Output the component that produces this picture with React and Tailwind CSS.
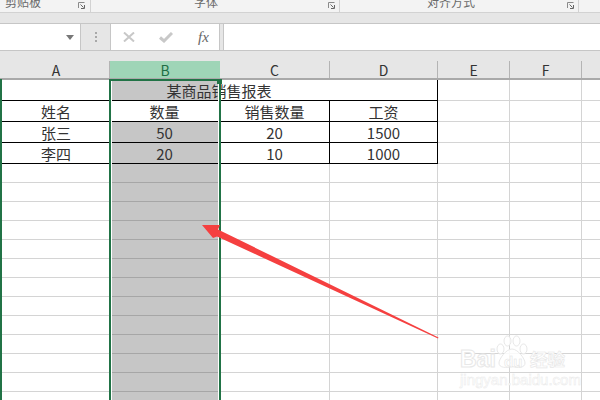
const FONT = "font-['Noto_Sans_CJK_SC','Noto_Sans',sans-serif]";

function Launcher() {
  return (
    <svg width="7" height="7" viewBox="0 0 7 7" className="block">
      <path d="M0.5 6V0.5H6.5" fill="none" stroke="#8a8a8a" />
      <path d="M2.5 2.5L5.5 5.5M3 6.5H6.5V3" fill="none" stroke="#666" />
    </svg>
  );
}

function RibbonGroup({ width, label, labelLeft, launcherGap }) {
  return (
    <div className={`relative h-full shrink-0 border-r border-[#d2d2d2] ${width}`}>
      <span className={`absolute top-[-6px] whitespace-nowrap text-[12px] leading-[16px] text-[#6a6a6a] ${labelLeft}`}>{label}</span>
      <span className={`absolute top-[2px] ${launcherGap}`}><Launcher /></span>
    </div>
  );
}

function HeaderCell({ label, width, selected }) {
  return (
    <div
      className={
        selected
          ? `flex shrink-0 items-center justify-center text-[14px] text-[#1f6e46] bg-[#9fd5b7] ${width}`
          : `flex shrink-0 items-center justify-center border-r border-[#b4b4b4] text-[14px] text-[#333] ${width}`
      }
    >
      {label}
    </div>
  );
}

const TOP_ROWS = [
  ["姓名", "数量", "销售数量", "工资"],
  ["张三", "50", "20", "1500"],
  ["李四", "20", "10", "1000"],
];

function DataCell({ children, width, gray }) {
  return (
    <div className={`flex h-full shrink-0 items-center justify-center border-r border-b border-black pt-px ${width} ${gray ? "bg-[#c6c6c6]" : "bg-white"}`}>
      {children}
    </div>
  );
}

function EmptyCols() {
  return (
    <>
      <div className="h-full w-[72px] shrink-0 border-r border-b border-[#d4d4d4]" />
      <div className="h-full w-[72px] shrink-0 border-r border-b border-[#d4d4d4]" />
      <div className="h-full flex-1 border-b border-[#d4d4d4]" />
    </>
  );
}

function BlankRow() {
  return (
    <div className="flex h-[19px] shrink-0">
      <div className="h-full w-[110px] shrink-0 border-b border-[#d4d4d4]" />
      <div className="h-full w-[110px] shrink-0 border-b border-[#a6a6a6] bg-[#c6c6c6]" />
      <div className="h-full w-[110px] shrink-0 border-r border-b border-[#d4d4d4]" />
      <div className="h-full w-[108px] shrink-0 border-r border-b border-[#d4d4d4]" />
      <EmptyCols />
    </div>
  );
}

export default function App() {
  return (
    <div className={`relative h-[400px] w-[600px] overflow-hidden bg-white ${FONT}`}>
      {/* ribbon */}
      <div className="flex h-[13px] border-b border-[#d2d2d2] bg-[#f3f3f3]">
        <RibbonGroup width="w-[91px]" label="剪贴板" labelLeft="left-[5px]" launcherGap="left-[78px]" />
        <RibbonGroup width="w-[249px]" label="字体" labelLeft="left-[103px]" launcherGap="left-[237px]" />
        <RibbonGroup width="w-[239px]" label="对齐方式" labelLeft="left-[87px]" launcherGap="left-[227px]" />
      </div>
      <div className="h-[10px] bg-[#e6e6e6]" />
      {/* formula bar */}
      <div className="flex h-[28px] items-stretch border-y border-[#c6c6c6] bg-[#e6e6e6]">
        <div className="flex w-[81px] shrink-0 items-center justify-end border-r border-[#c6c6c6] bg-white pr-[6px]">
          <svg width="8" height="5" viewBox="0 0 8 5"><path d="M0 0H8L4 5Z" fill="#777" /></svg>
        </div>
        <div className="flex w-[29px] shrink-0 flex-col items-center justify-center gap-[2px]">
          <span className="h-[2px] w-[2px] bg-[#a8a8a8]" />
          <span className="h-[2px] w-[2px] bg-[#a8a8a8]" />
          <span className="h-[2px] w-[2px] bg-[#a8a8a8]" />
        </div>
        <div className="flex w-[110px] shrink-0 items-center border-x border-[#c6c6c6] bg-white">
          <svg width="12" height="10" viewBox="0 0 12 10" className="ml-[12px]">
            <path d="M1 0.5L11 9.5M11 0.5L1 9.5" stroke="#c8c8c8" strokeWidth="2" fill="none" />
          </svg>
          <svg width="14" height="11" viewBox="0 0 14 11" className="ml-[24px]">
            <path d="M1 5.5L5 9L13 1" stroke="#c8c8c8" strokeWidth="3" fill="none" />
          </svg>
          <span className="ml-[25px] whitespace-nowrap text-[15px] italic leading-none font-['Liberation_Serif',serif] text-[#666]">fx</span>
        </div>
        <div className="ml-[3px] flex-1 border-l border-[#c6c6c6] bg-white" />
      </div>
      {/* column headers */}
      <div className="h-[10px] bg-[#e6e6e6]" />
      <div className="flex h-[19px] border-b-2 border-[#a9a9a9] bg-[#e6e6e6] leading-none">
        <HeaderCell label="A" width="w-[110px] pl-[3px]" />
        <HeaderCell label="B" width="w-[110px]" selected />
        <HeaderCell label="C" width="w-[110px]" />
        <HeaderCell label="D" width="w-[108px]" />
        <HeaderCell label="E" width="w-[72px]" />
        <HeaderCell label="F" width="w-[72px]" />
      </div>
      {/* sheet */}
      <div className="flex flex-col text-[15px] leading-none text-[#333]">
        <div className="flex h-[21px] shrink-0">
          <div className="relative flex h-full w-[438px] shrink-0 items-center justify-center border-r border-b border-black pl-px">
            <div className="absolute inset-y-0 left-[110px] w-[110px] bg-[#c6c6c6]" />
            <span className="relative">某商品销售报表</span>
          </div>
          <EmptyCols />
        </div>
        {TOP_ROWS.map((r, i) => (
          <div key={i} className="flex h-[21px] shrink-0">
            <DataCell width="w-[110px] pl-[3px]">{r[0]}</DataCell>
            <DataCell width="w-[110px]" gray={i > 0}>{r[1]}</DataCell>
            <DataCell width="w-[110px]">{r[2]}</DataCell>
            <DataCell width="w-[108px]">{r[3]}</DataCell>
            <EmptyCols />
          </div>
        ))}
        {Array.from({ length: 13 }).map((_, i) => (
          <BlankRow key={i} />
        ))}
      </div>
      {/* selection frame */}
      <div className="absolute left-0 top-[79px] bottom-0 w-[2px] bg-[#217346]" />
      <div className="absolute left-[109px] top-[79px] bottom-0 w-[112px] border-x-2 border-t-2 border-[#217346]">
        <div className="absolute inset-y-0 left-0 w-px bg-white" />
        <div className="absolute inset-y-0 right-0 w-px bg-white" />
      </div>
      <div className="absolute left-[217px] top-[79px] h-[5px] w-[5px] bg-[#217346]" />
      {/* annotation arrow */}
      <svg className="absolute left-0 top-0" width="600" height="400" viewBox="0 0 600 400">
        <polygon points="202,225 220,225 218,229.5 438.5,337.5 438,338.5 217,236.5 213,238" fill="#f54040" />
      </svg>
      {/* watermark */}
      <svg className="absolute left-[496px] top-[335px]" width="32" height="33" viewBox="0 0 32 33">
        <g fill="#fff" fillOpacity="0.85" stroke="#e8e8e8" strokeWidth="1">
          <ellipse cx="4.5" cy="14" rx="3.5" ry="5" />
          <ellipse cx="11.5" cy="6" rx="3.5" ry="5" />
          <ellipse cx="20.5" cy="6" rx="3.5" ry="5" />
          <ellipse cx="27.5" cy="14" rx="3.5" ry="5" />
          <path d="M16 14C10 14 3 24 3 28C3 33 10 33 16 31.5C22 33 29 33 29 28C29 24 22 14 16 14Z" />
        </g>
      </svg>
      <span className="absolute left-[504px] top-[354px] text-[15px] font-bold leading-none text-white [-webkit-text-stroke:0.5px_#e2e2e2] font-['Liberation_Sans',sans-serif]">du</span>
      <span className="absolute left-[460px] top-[348px] text-[23px] font-bold leading-none text-white [-webkit-text-stroke:1px_#e8e8e8] font-['Liberation_Sans',sans-serif]">Bai</span>
      <span className="absolute left-[530px] top-[350px] text-[17.5px] font-bold leading-none text-white [-webkit-text-stroke:0.7px_#e8e8e8]">经验</span>
      <span className="absolute left-[460px] top-[372px] text-[15px] leading-none text-white [-webkit-text-stroke:0.5px_#eaeaea] font-['Liberation_Sans',sans-serif]">jingyan.baidu.com</span>
    </div>
  );
}
